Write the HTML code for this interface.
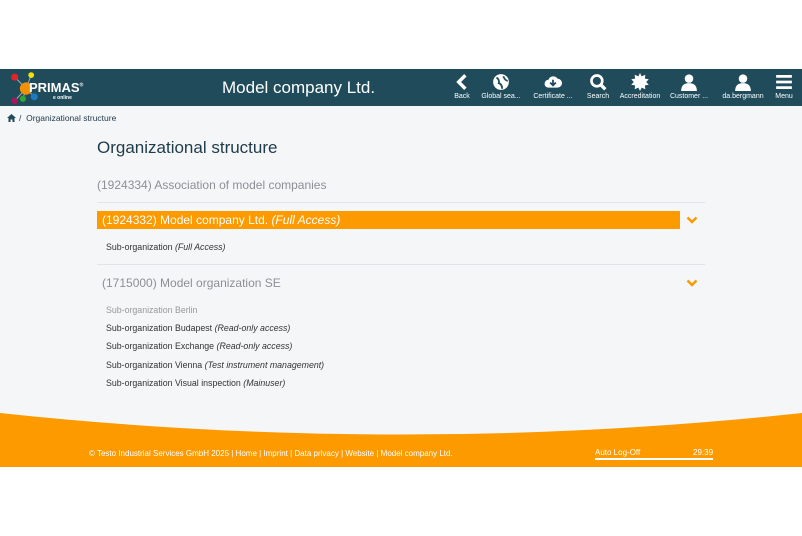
<!DOCTYPE html>
<html><head><meta charset="utf-8"><style>
body{margin:0;width:802px;height:536px;background:#fff;font-family:"Liberation Sans",sans-serif;position:relative;overflow:hidden}
.hdr{position:absolute;top:69px;left:0;width:802px;height:37px;background:#1f4b5b}
.main{position:absolute;top:106px;left:0;width:802px;height:330px;background:#f5f6f8}
.t{position:absolute;white-space:nowrap}
.nav{position:absolute;top:0;text-align:center;color:#fff;font-size:7px}
.nav svg{display:block;margin:4px auto 2px;width:18px;height:18px}
.line{position:absolute;left:97px;width:608px;height:1px;background:#e2e4e7}
.sub{font-size:8.8px;color:#333}
.chev{position:absolute;width:12px;height:8px}
</style></head><body>
<div class="hdr">
 <svg style="position:absolute;left:9px;top:3px" width="32" height="33" viewBox="0 0 30 32">
  <g stroke="#9ab" stroke-width="1"><line x1="5" y1="5" x2="16" y2="16"/><line x1="21" y1="3" x2="16" y2="16"/><line x1="5" y1="28" x2="16" y2="16"/><line x1="13" y1="26" x2="16" y2="16"/><line x1="24" y1="24" x2="16" y2="16"/></g>
  <circle cx="5" cy="5" r="3.4" fill="#e2242b"/><circle cx="21" cy="3" r="2.8" fill="#f5e100"/><circle cx="16" cy="16" r="6" fill="#f39200"/><circle cx="5" cy="28" r="3.2" fill="#a3195b"/><circle cx="13" cy="26" r="3" fill="#2fa637"/><circle cx="24" cy="24" r="3.4" fill="#1e7ac2"/>
 </svg>
 <div class="t" style="left:29px;top:11px;color:#fff;font-weight:bold;font-size:13px">PRIMAS<sup style="font-size:5px">®</sup></div>
 <div class="t" style="left:53px;top:26px;color:#fff;font-weight:bold;font-size:5px">e online</div>
 <div class="t" style="left:222px;top:9px;color:#fff;font-size:17px">Model company Ltd.</div>
 <div class="nav" style="left:452px;width:20px"><svg viewBox="0 0 16 16"><path d="M11 2 L5 8 L11 14" fill="none" stroke="#fff" stroke-width="3"/></svg>Back</div>
 <div class="nav" style="left:478px;width:46px"><svg viewBox="0 0 16 16"><circle cx="8" cy="8" r="7" fill="#fff"/><path d="M4 4 Q7 6 6 9 Q9 10 9 14 M10 3 Q12 7 14 7" fill="none" stroke="#1f4b5b" stroke-width="1.6"/></svg>Global sea...</div>
 <div class="nav" style="left:530px;width:46px"><svg viewBox="0 0 16 16"><path d="M4 13 A3.5 3.5 0 0 1 4 6 A4.5 4.5 0 0 1 12 5 A4 4 0 0 1 12 13 Z" fill="#fff"/><path d="M8 6 V11 M5.5 8.5 L8 11 L10.5 8.5" fill="none" stroke="#1f4b5b" stroke-width="1.6"/></svg>Certificate ...</div>
 <div class="nav" style="left:584px;width:28px"><svg viewBox="0 0 16 16"><circle cx="7" cy="7" r="4.8" fill="none" stroke="#fff" stroke-width="2.4"/><path d="M10.5 10.5 L14.5 14.5" stroke="#fff" stroke-width="3"/></svg>Search</div>
 <div class="nav" style="left:617px;width:46px"><svg viewBox="0 0 16 16"><polygon points="8,0 9.5,3 12.7,1.6 12.4,5 15.8,5.6 13.5,8 15.8,10.4 12.4,11 12.7,14.4 9.5,13 8,16 6.5,13 3.3,14.4 3.6,11 0.2,10.4 2.5,8 0.2,5.6 3.6,5 3.3,1.6 6.5,3" fill="#fff"/></svg>Accreditation</div>
 <div class="nav" style="left:667px;width:44px"><svg viewBox="0 0 16 16"><circle cx="8" cy="5" r="3.8" fill="#fff"/><path d="M1 16 Q1 9 8 9 Q15 9 15 16 Z" fill="#fff"/></svg>Customer ...</div>
 <div class="nav" style="left:718px;width:50px"><svg viewBox="0 0 16 16"><circle cx="8" cy="5" r="3.8" fill="#fff"/><path d="M1 16 Q1 9 8 9 Q15 9 15 16 Z" fill="#fff"/></svg>da.bergmann</div>
 <div class="nav" style="left:772px;width:24px"><svg viewBox="0 0 16 16"><path d="M1 3H15M1 8H15M1 13H15" stroke="#fff" stroke-width="2.4"/></svg>Menu</div>
</div>
<div class="main"></div>
<svg class="t" style="left:7px;top:114px" width="9" height="8" viewBox="0 0 9 8"><path d="M4.5 0 L9 4 H7.5 V8 H5.5 V5.5 H3.5 V8 H1.5 V4 H0 Z" fill="#1f4b5b"/></svg>
<div class="t" style="left:19px;top:113px;font-size:8.5px;color:#1c3a48">/ &nbsp;Organizational structure</div>
<div class="t" style="left:97px;top:138px;font-size:17px;color:#1f3b4a">Organizational structure</div>
<div class="t" style="left:97px;top:178px;font-size:12px;color:#8a9096">(1924334) Association of model companies</div>
<div class="line" style="top:202px"></div>
<div class="t" style="left:97px;top:211px;width:583px;height:18px;background:#fd9a00"></div>
<div class="t" style="left:102px;top:213px;font-size:12px;color:#fff">(1924332) Model company Ltd. <i>(Full Access)</i></div>
<svg class="chev" style="left:686px;top:216px" viewBox="0 0 12 8"><path d="M1.5 1.5 L6 6 L10.5 1.5" fill="none" stroke="#fd9a00" stroke-width="2.5"/></svg>
<div class="t sub" style="left:106px;top:242px">Sub-organization <i>(Full Access)</i></div>
<div class="line" style="top:264px"></div>
<div class="t" style="left:102px;top:276px;font-size:12px;color:#8a9096">(1715000) Model organization SE</div>
<svg class="chev" style="left:686px;top:279px" viewBox="0 0 12 8"><path d="M1.5 1.5 L6 6 L10.5 1.5" fill="none" stroke="#fd9a00" stroke-width="2.5"/></svg>
<div class="t sub" style="left:106px;top:305px;color:#999">Sub-organization Berlin</div>
<div class="t sub" style="left:106px;top:323px">Sub-organization Budapest <i>(Read-only access)</i></div>
<div class="t sub" style="left:106px;top:341px">Sub-organization Exchange <i>(Read-only access)</i></div>
<div class="t sub" style="left:106px;top:360px">Sub-organization Vienna <i>(Test instrument management)</i></div>
<div class="t sub" style="left:106px;top:378px">Sub-organization Visual inspection <i>(Mainuser)</i></div>
<svg class="t" style="left:0;top:410px" width="802" height="57" viewBox="0 0 802 57" preserveAspectRatio="none"><path d="M0 3 Q401 46 802 3 V57 H0 Z" fill="#fd9a00"/></svg>
<div class="t" style="left:89px;top:449px;font-size:8px;color:#fff">© Testo Industrial Services GmbH 2025 | Home | Imprint | Data privacy | Website | Model company Ltd.</div>
<div class="t" style="left:595px;top:448px;font-size:8px;color:#fff">Auto Log-Off</div>
<div class="t" style="left:693px;top:448px;font-size:8px;color:#fff">29:39</div>
<div class="t" style="left:595px;top:458px;width:118px;height:2px;background:#fff"></div>
</body></html>
